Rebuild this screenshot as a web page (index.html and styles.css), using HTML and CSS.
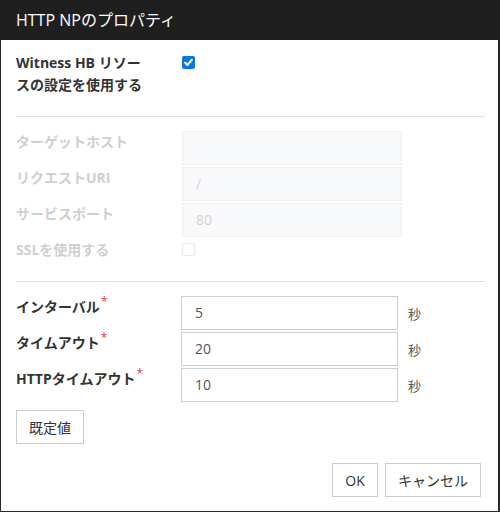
FILE: index.html
```html
<!DOCTYPE html>
<html lang="ja">
<head>
<meta charset="utf-8">
<link rel="stylesheet" href="styles.css">
</head>
<body>
<div class="dialog">
  <div class="header">HTTP NPのプロパティ</div>
  <div class="body">
    <div class="row row-first">
      <div class="label label-wrap">Witness HB リソースの設定を使用する</div>
      <div class="control"><span class="check checked"><svg viewBox="0 0 13 13" width="13" height="13"><path d="M3.2 6.8 L5.4 9 L9.8 3.9" fill="none" stroke="#fff" stroke-width="2.2" stroke-linecap="round" stroke-linejoin="round"/></svg></span></div>
    </div>
    <div class="sep"></div>
    <div class="group">
      <div class="row disabled">
        <div class="label">ターゲットホスト</div>
        <div class="control"><div class="input input-dis"></div></div>
      </div>
      <div class="row disabled">
        <div class="label">リクエストURI</div>
        <div class="control"><div class="input input-dis">/</div></div>
      </div>
      <div class="row disabled">
        <div class="label">サービスポート</div>
        <div class="control"><div class="input input-dis">80</div></div>
      </div>
      <div class="row disabled row-check">
        <div class="label">SSLを使用する</div>
        <div class="control"><span class="check check-dis"></span></div>
      </div>
    </div>
    <div class="sep sep2"></div>
    <div class="group">
      <div class="row">
        <div class="label">インターバル<span class="req">*</span></div>
        <div class="control"><div class="input input-en">5</div><span class="unit">秒</span></div>
      </div>
      <div class="row">
        <div class="label">タイムアウト<span class="req">*</span></div>
        <div class="control"><div class="input input-en">20</div><span class="unit">秒</span></div>
      </div>
      <div class="row">
        <div class="label">HTTPタイムアウト<span class="req">*</span></div>
        <div class="control"><div class="input input-en">10</div><span class="unit">秒</span></div>
      </div>
    </div>
    <div class="defaults"><button class="btn btn-default">既定値</button></div>
  </div>
  <div class="footer">
    <button class="btn btn-ok">OK</button>
    <button class="btn btn-cancel">キャンセル</button>
  </div>
</div>
</body>
</html>
```

FILE: styles.css
```css
* { box-sizing: border-box; }
html, body { margin: 0; padding: 0; background: #fff; }
body {
  font-family: "Open Sans", "Noto Sans CJK JP", sans-serif;
  font-size: 14px;
  color: #333;
}
.dialog {
  width: 500px;
  height: 512px;
  border-left: 1px solid #2a2a2a;
  border-right: 2px solid #2a2a2a;
  border-bottom: 1px solid #2a2a2a;
  display: flex;
  flex-direction: column;
  background: #fff;
}
.header {
  height: 40px;
  background: #1f1f1f;
  color: #fff;
  font-size: 16px;
  line-height: 40px;
  margin: 0 -2px 0 -1px;
  padding-left: 16px;
}
.body {
  padding: 12px 15px 0 15px;
  flex: 1;
}
.row {
  display: flex;
  align-items: flex-start;
  min-height: 34px;
  margin-bottom: 2px;
}
.row-first { min-height: 44px; }
.row-check { min-height: 22px; }
.label {
  width: 166px;
  flex: none;
  font-weight: bold;
  line-height: 22px;
  padding-right: 16px;
}
.label-wrap { width: 166px; padding-right: 36px; }
.control {
  display: flex;
  align-items: center;
}
.check {
  display: inline-block;
  width: 13px;
  height: 13px;
  border-radius: 2px;
  margin-top: 4px;
}
.check svg { display: block; }
.checked { background: #0a79d6; }
.check-dis { border: 1px solid #eaeaea; background: #fff; }
.sep {
  height: 1px;
  background: #e3e3e3;
  margin: 20px 0 14px 0;
  width: 469px;
}
.sep2 { margin-top: 20px; }
.disabled .label { color: #cfcfcf; }
.input {
  height: 34px;
  line-height: 32px;
  padding: 0 13px;
  font-size: 14px;
}
.input-dis {
  width: 220px;
  background: #f8f9fa;
  border: 1px solid #efefef;
  color: #d0d0d0;
}
.input-en {
  width: 217px;
  margin-left: -1px;
  background: #fff;
  border: 1px solid #ccd0d5;
  color: #555;
}
.unit {
  margin-left: 10px;
  color: #555;
  font-size: 13px;
}
.req {
  color: #e8394a;
  font-size: 12px;
  vertical-align: top;
  line-height: 12px;
  margin-left: 1px;
  font-weight: normal;
}
.defaults { margin-top: 8px; }
.btn {
  font-family: "Open Sans", "Noto Sans CJK JP", sans-serif;
  font-size: 14px;
  color: #333;
  background: #fff;
  border: 1px solid #cccccc;
  height: 34px;
  padding: 0;
  cursor: pointer;
}
.btn-default { width: 68px; margin-left: 0; }
.footer {
  display: flex;
  justify-content: flex-end;
  gap: 7px;
  padding: 0 17px 14px 0;
}
.btn-ok { width: 46px; }
.btn-cancel { width: 96px; }
```
